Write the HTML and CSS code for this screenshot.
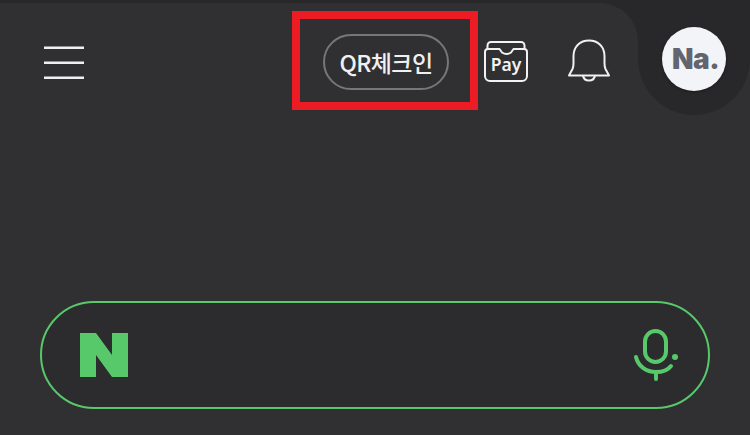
FILE: index.html
```html
<!DOCTYPE html>
<html lang="ko">
<head>
<meta charset="utf-8">
<title>QR체크인</title>
<link rel="stylesheet" href="styles.css">
</head>
<body>
<div class="screen">
  <header class="header">
    <div class="bar">
      <svg class="menu" width="40" height="34" viewBox="0 0 40 34" fill="none" stroke="#f0f0f0" stroke-width="2.600">
        <path d="M0 1.700H40"/>
        <path d="M0 16.700H40"/>
        <path d="M0 31.700H40"/>
      </svg>
      <div class="actions">
        <div class="qr-frame"><div class="qr-pill">QR체크인</div></div>
        <div class="pay">
          <svg class="pay-svg" width="46" height="42" viewBox="0 0 46 42" fill="none" stroke="#f2f2f2" stroke-width="2" stroke-linejoin="round" stroke-linecap="round">
            <path d="M4.500 9V5.500A3.500 3.500 0 0 1 8 2H38A3.500 3.500 0 0 1 41.500 5.500V9"/>
            <path d="M2 12A3 3 0 0 1 5 9H16.500L19 12.500Q23.500 15.500 28 12.500L30.500 9H41A3 3 0 0 1 44 12V36A5 5 0 0 1 39 41H7A5 5 0 0 1 2 36Z"/>
          </svg>
          <span class="pay-label">Pay</span>
        </div>
        <svg class="bell" width="44" height="44" viewBox="0 0 44 44" fill="none" stroke="#f0f0f0" stroke-width="2" stroke-linejoin="round">
          <path d="M2 36.500 L5.500 30 C6.500 28 6.500 26.500 6.500 24 V17 C6.500 7.500 13 1.500 22 1.500 C31 1.500 37.500 7.500 37.500 17 V24 C37.500 26.500 37.500 28 38.500 30 L42 36.500 Z"/>
          <path d="M16 36.500 C16.500 40 19 41.500 22 41.500 C25 41.500 27.500 40 28 36.500"/>
        </svg>
      </div>
    </div>
    <div class="profile-slot">
      <div class="profile">
        <div class="avatar">Na.</div>
      </div>
    </div>
  </header>
  <main class="main">
    <div class="search">
      <svg class="logo" width="48" height="44" viewBox="0 0 48 44"><path fill="#57c96b" d="M0 0H16L32 22V0H48V44H32L16 22V44H0Z"/></svg>
      <svg class="mic" width="46" height="56" viewBox="0 0 46 56" fill="none" stroke="#57c96b" stroke-width="4" stroke-linecap="round">
        <rect x="13" y="4" width="21" height="31" rx="10.500"/>
        <path d="M4 30C6 39 14 45 24 45C31 45 36 43 39 39"/>
        <path d="M24 45V52"/>
        <circle cx="43" cy="30" r="3" fill="#57c96b" stroke="none"/>
      </svg>
    </div>
  </main>
</div>
</body>
</html>
```
FILE: styles.css
```css
html, body {
  margin: 0;
  padding: 0;
  background: #28282b;
}
.screen {
  width: 750px;
  height: 435px;
  overflow: hidden;
  display: flex;
  flex-direction: column;
  font-family: "Noto Sans CJK KR", "Noto Sans", sans-serif;
}
.header {
  display: flex;
  height: 115px;
}
.bar {
  flex: 1;
  margin-top: 3px;
  background: #303032;
  border-top-right-radius: 38px;
  display: flex;
  align-items: flex-start;
  justify-content: space-between;
  padding-left: 44px;
}
.menu {
  display: block;
  margin-top: 43px;
}
.actions {
  display: flex;
  align-items: flex-start;
  margin-right: 27px;
}
.qr-frame {
  width: 170px;
  height: 83px;
  margin-top: 8px;
  border: 8px solid #ed1c24;
  display: flex;
  align-items: center;
  justify-content: center;
}
.qr-pill {
  box-sizing: border-box;
  width: 126px;
  height: 56px;
  margin: 2px 0 0 2px;
  border: 2px solid #77777a;
  border-radius: 28px;
  color: #f0f0f0;
  font-size: 23px;
  font-weight: 500;
  letter-spacing: -0.600px;
  display: flex;
  align-items: center;
  justify-content: center;
}
.pay {
  position: relative;
  width: 46px;
  height: 42px;
  margin: 37px 0 0 5px;
}
.pay-svg {
  display: block;
}
.pay-label {
  position: absolute;
  left: 0;
  right: 0;
  top: 12px;
  text-align: center;
  color: #f2f2f2;
  font-family: "Noto Sans", sans-serif;
  font-size: 17.500px;
  line-height: 24px;
  font-weight: 600;
}
.bell {
  margin: 36px 0 0 38px;
}
.profile-slot {
  width: 112px;
  background: #303032;
}
.profile {
  box-sizing: border-box;
  height: 115px;
  background: #28282b;
  border-radius: 0 0 56px 56px;
  padding: 27px 0 0 24px;
}
.avatar {
  box-sizing: border-box;
  width: 64px;
  height: 64px;
  padding-left: 3px;
  border-radius: 50%;
  background: #f3f4f7;
  color: #62646f;
  font-family: "Inter", sans-serif;
  font-weight: 900;
  font-size: 28px;
  letter-spacing: -0.500px;
  display: flex;
  align-items: center;
  justify-content: center;
  box-shadow: 0 1px 3px rgba(0, 0, 0, 0.35);
}
.main {
  flex: 1;
  background: #303032;
  padding: 186px 40px 0;
}
.search {
  box-sizing: border-box;
  width: 670px;
  height: 108px;
  border: 2px solid #57c96b;
  border-radius: 54px;
  background: #2c2c2e;
  display: flex;
  align-items: center;
  justify-content: space-between;
  padding: 0 30px 0 38px;
}
.logo {
  display: block;
}
.mic {
  display: block;
}
```
